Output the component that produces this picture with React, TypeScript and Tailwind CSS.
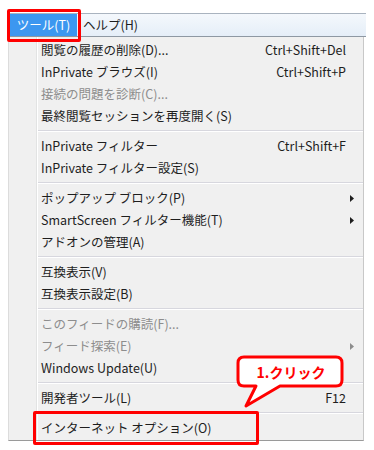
import React from 'react';

type Item =
  | { type: 'sep' }
  | { type: 'item'; label: string; shortcut?: string; disabled?: boolean; submenu?: boolean };

const items: Item[] = [
  { type: 'item', label: '閲覧の履歴の削除(D)...', shortcut: 'Ctrl+Shift+Del' },
  { type: 'item', label: 'InPrivate ブラウズ(I)', shortcut: 'Ctrl+Shift+P' },
  { type: 'item', label: '接続の問題を診断(C)...', disabled: true },
  { type: 'item', label: '最終閲覧セッションを再度開く(S)' },
  { type: 'sep' },
  { type: 'item', label: 'InPrivate フィルター', shortcut: 'Ctrl+Shift+F' },
  { type: 'item', label: 'InPrivate フィルター設定(S)' },
  { type: 'sep' },
  { type: 'item', label: 'ポップアップ ブロック(P)', submenu: true },
  { type: 'item', label: 'SmartScreen フィルター機能(T)', submenu: true },
  { type: 'item', label: 'アドオンの管理(A)' },
  { type: 'sep' },
  { type: 'item', label: '互換表示(V)' },
  { type: 'item', label: '互換表示設定(B)' },
  { type: 'sep' },
  { type: 'item', label: 'このフィードの購読(F)...', disabled: true },
  { type: 'item', label: 'フィード探索(E)', disabled: true, submenu: true },
  { type: 'item', label: 'Windows Update(U)' },
  { type: 'sep' },
  { type: 'item', label: '開発者ツール(L)', shortcut: 'F12' },
  { type: 'sep' },
  { type: 'item', label: 'インターネット オプション(O)' },
];

const font = { fontFamily: '"Noto Sans CJK JP", "Noto Sans", sans-serif' };

const App: React.FC = () => {
  return (
    <div className="relative w-[374px] h-[450px] bg-white overflow-hidden text-[12.5px] text-[#1e1e1e]" style={font}>
      <div className="pt-[13px] pl-2 w-[366px]">
        {/* menu bar */}
        <div className="flex h-[24px] border-t border-b border-t-[#a9b3bf] border-b-[#8e98a3] bg-gradient-to-b from-[#f4f8fc] to-[#e5eef8]">
          <div className="ml-[2px] w-[67px] flex items-center justify-center bg-[#3c97f0] text-white">ツール(T)</div>
          <div className="ml-[6px] flex items-center">ヘルプ(H)</div>
        </div>

        {/* dropdown */}
        <div className="flex w-[356px] bg-[#f0f0f0] border-l border-l-[#dcdcdc] border-r border-r-[#c8c8c8] border-b border-b-[#9a9a9a]">
          <div className="w-[28px] border-r border-r-[#e2e3e3]" />
          <div className="flex-1 border-l border-l-white pt-[2px] pb-[1px]">
            {items.map((it, i) =>
              it.type === 'sep' ? (
                <div key={i} className="h-[8px] flex flex-col justify-center">
                  <div className="h-px bg-[#d7d7de]" />
                  <div className="h-px bg-white" />
                </div>
              ) : (
                <div key={i} className={`h-[22px] flex items-center pl-[3px] ${it.disabled ? 'text-[#8d8d8d]' : ''}`}>
                  <span>{it.label}</span>
                  {it.shortcut && <span className="ml-auto mr-[17px]">{it.shortcut}</span>}
                  {it.submenu && (
                    <svg className="ml-auto mr-[9px]" width="4" height="7" viewBox="0 0 4 7">
                      <path d="M0 0 L4 3.5 L0 7 Z" fill={it.disabled ? '#8d8d8d' : '#1e1e1e'} />
                    </svg>
                  )}
                </div>
              )
            )}
          </div>
        </div>
      </div>

      {/* red highlight on ツール */}
      <div className="absolute left-[7px] top-[9px] w-[74px] h-[33px] border-[3px] border-[#ff0000] rounded-[2px]" />

      {/* red highlight on インターネット オプション */}
      <div className="absolute left-[33px] top-[411px] w-[226px] h-[34px] border-[3px] border-[#ff0000] rounded-[2px]" />

      {/* callout */}
      <svg className="absolute left-[236px] top-[355px]" width="110" height="56" viewBox="0 0 110 56">
        <path
          d="M8 2 H100 Q106 2 106 8 V25 Q106 31 100 31 H44 L10 51 L20 31 H8 Q2 31 2 25 V8 Q2 2 8 2 Z"
          fill="#ffffff"
          stroke="#ff0000"
          strokeWidth="3"
          strokeLinejoin="round"
        />
      </svg>
      <div className="absolute left-[238px] top-[358px] w-[106px] h-[28px] flex items-center justify-center text-[#ff0000] font-bold text-[14px]">
        1.クリック
      </div>
    </div>
  );
};

export default App;
